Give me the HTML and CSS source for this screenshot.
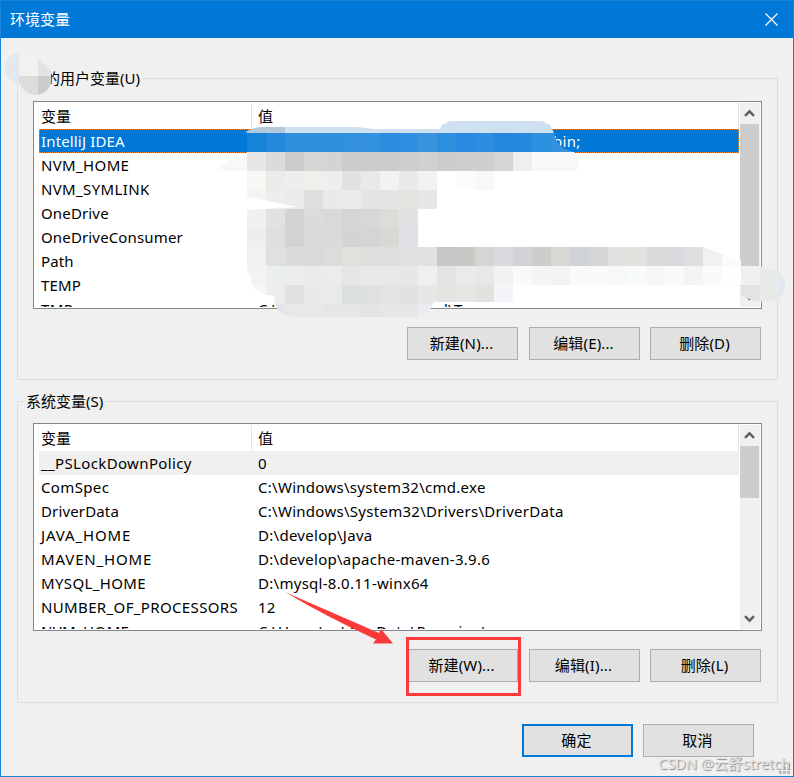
FILE: index.html
```html
<!DOCTYPE html>
<html lang="zh-CN">
<head>
<meta charset="utf-8">
<title>环境变量</title>
<link rel="stylesheet" href="styles.css">
</head>
<body>
<main class="window">
  <header class="titlebar">
    <span>环境变量</span>
    <svg class="close" width="13" height="13" viewBox="0 0 13 13"><path d="M.5 .5l12 12M12.5 .5l-12 12" stroke="#fff" stroke-width="1.2" fill="none"/></svg>
  </header>

  <section class="group user">
    <h2 class="legend">的用户变量(U)</h2>
    <div class="list">
      <div class="table">
        <div class="row head"><span>变量</span><span>值</span></div>
        <div class="row selected"><span>IntelliJ IDEA</span><span class="tail-bin">bin;</span></div>
        <div class="row caps"><span>NVM_HOME</span><span></span></div>
        <div class="row caps"><span>NVM_SYMLINK</span><span class="tail-link">_</span></div>
        <div class="row"><span>OneDrive</span><span>C:\U</span></div>
        <div class="row"><span>OneDriveConsumer</span><span></span></div>
        <div class="row"><span>Path</span><span></span></div>
        <div class="row"><span>TEMP</span><span></span></div>
        <div class="row caps"><span>TMP</span><span>C:\<i class="tail-tmp">l\Temp</i></span></div>
      </div>
      <div class="scroll">
        <svg width="19" height="21" viewBox="0 0 19 21"><path d="M5 12.8l4.5-4.5 4.5 4.5" fill="none" stroke="#606060" stroke-width="2.4"/></svg>
        <div class="thumb tall"></div>
        <svg class="down" width="19" height="21" viewBox="0 0 19 21"><path d="M5 8.200l4.500 4.500 4.500-4.500" fill="none" stroke="#606060" stroke-width="2.4"/></svg>
      </div>
    </div>
    <div class="buttons"><button>新建(N)...</button><button>编辑(E)...</button><button>删除(D)</button></div>
  </section>

  <section class="group system">
    <h2 class="legend">系统变量(S)</h2>
    <div class="list">
      <div class="table">
        <div class="row head"><span>变量</span><span>值</span></div>
        <div class="row muted caps"><span>__PSLockDownPolicy</span><span>0</span></div>
        <div class="row caps"><span>ComSpec</span><span>C:\Windows\system32\cmd.exe</span></div>
        <div class="row"><span>DriverData</span><span>C:\Windows\System32\Drivers\DriverData</span></div>
        <div class="row java"><span>JAVA_HOME</span><span>D:\develop\Java</span></div>
        <div class="row java"><span>MAVEN_HOME</span><span>D:\develop\apache-maven-3.9.6</span></div>
        <div class="row caps"><span>MYSQL_HOME</span><span>D:\mysql-8.0.11-winx64</span></div>
        <div class="row caps"><span>NUMBER_OF_PROCESSORS</span><span>12</span></div>
        <div class="row caps"><span>NVM_HOME</span><span>C:\Users\xx\AppData\Roaming\nvm</span></div>
      </div>
      <div class="scroll">
        <svg width="19" height="21" viewBox="0 0 19 21"><path d="M5 12.8l4.5-4.5 4.5 4.5" fill="none" stroke="#606060" stroke-width="2.4"/></svg>
        <div class="thumb short"></div>
        <svg class="down" width="19" height="21" viewBox="0 0 19 21"><path d="M5 8.200l4.500 4.500 4.500-4.500" fill="none" stroke="#606060" stroke-width="2.4"/></svg>
      </div>
    </div>
    <div class="buttons"><button>新建(W)...</button><button>编辑(I)...</button><button>删除(L)</button></div>
  </section>

  <footer class="footer"><button class="primary">确定</button><button>取消</button></footer>
</main>

<svg class="overlay" width="794" height="777" viewBox="0 0 794 777">
  <defs>
    <clipPath id="brush">
      <path d="M245 132L254 128L260 127H358L374 129H440L442 125L450 121H542L550 125L554 133L557 142L563 148L574 152L578 158L579 164L576 171H494V190H437V209H418V247H703L722 254L741 261V266H760L779 272L785 280V291L779 299L768 302L755 301L741 296V302H437L434 302L432 307L426 314L418 317H295L285 315L278 310L275 304L274 296L262 294L255 290L252 284L250 275L247 274V210L298 207L247 197V171H216L222 164L231 160L247 156V132Z"/>
    </clipPath>
    <clipPath id="avatar"><path d="M19 52C0 54 0 81 19 83q6 12 17 12 10 0 15-11V71L38 58v-6z"/></clipPath>
  </defs>
  <g id="mosaic" clip-path="url(#brush)" shape-rendering="crispEdges"></g>
  <g clip-path="url(#avatar)">
    <path fill="#e2e8ed" d="M0 50h19v34H0z"/><path fill="#f1f1f1" d="M19 52h19v24H19z"/>
    <path fill="#e3e3e3" d="M38 57h14v19H38z"/><path fill="#dddcdb" d="M19 76h19v20H19z"/><path fill="#cbcccd" d="M38 76h14v20H38z"/>
  </g>
  <path fill="#fb3a3a" d="M285 592L379 633L381 629L393 643.500L373 643.500L376 639.500Q325 616 285 592z"/>
  <path fill="none" stroke="#fb3a3a" stroke-width="3" d="M407.500 638.500h112v56h-112z"/>
  <path fill="#bcbcbc" d="M787 763h3v3h-3zM783 767h3v3h-3zM787 767h3v3h-3zM779 771h3v3h-3zM783 771h3v3h-3zM787 771h3v3h-3z"/>
</svg>
<div class="watermark">CSDN @云舒stretch</div>
<script src="mosaic.js"></script>
</body>
</html>
```
FILE: mosaic.js
```js
// Each row: x, y, height, then one colour per 19px cell ("-" leaves a gap).
const CELL = 19;
const rows = [
  [228, 114, 19, "b5cad9 b5cad9 b5cad9 cfe1f0 cfe1f0 cfe1f0 cfe1f0 cfe1f0 cfe1f0 cfe1f0 cfe1f0 cfe1f0 cfe1f0 cfe1f0 cfe1f0 cfe1f0 cfe1f0 cfe1f0"],
  [247, 133, 19, "1683db 2589de 2f90df 2f90df 2f90df 3191df 3491df 2a8ddd 2c8fdf 3993df 2d8fe0 278ae0 2c8ee0 2287dd 2589df 2c8fdf 3491df 3491df"],
  [209, 152, 19, "f7f8f8 f7f8f8 e7e7e7 dadcdb cdcccb d5d6d4 d6d4d2 cdcccd cbcbcb cbcbcc cfcdce d0d1d0 cbcdcb cfcfcd cfcfcf d4d5d4 efefef f7f8f8 f7f8f8 f7f8f8"],
  [247, 171, 19, "f7f7f4 ebebe9 eeeeee efefec ecefee e2e2e3 e9e9e9 f2f2f2 e9e9e9 f2f2f2 - fcfcfc f8f8f8"],
  [247, 190, 19, "f3f3f3 eceeec ebebe9 dededf e8eae9 ebebec e4e4e2 e4e4e4 e4e4e1 e6e8e7"],
  [247, 209, 19, "f0f0f0 e1e1e1 d3d3d4 dbdbd9 d9d9da d5d5d5 d7d7d7 dcdcd9 e1e2e4"],
  [247, 228, 19, "eeeeee dfdfdf d2d2d2 dadad8 dadada d4d4d4 d5d5d5 d8d8d5 e0e1e4"],
  [247, 247, 19, "f1f1f1 e0e0e0 dadcdb d8dad9 dcdcdd e1e0dd dedede dcdfdd e1e1e0 e1e1df c5c7c7 cac8c4 d5d5d4 d9dadd d2d3d6 cdcdc9 d9d7d4 d0d4d6 d5d5d3 e0e3e2 e4e2df dadcdb d8dadd dedede f0f2f1 fbfbfb"],
  [247, 266, 19, "f3f3f3 eaeeed ededed ebebeb ececec e5e5e6 e9e9e9 e9e9e9 e8e6e7 edeff1 e4e4e1 ebebeb e8e8e8 f2f2f2 f9fbfa f5f5f5 f3f3f3 fafafa fafaf8 f7f8f8 f7fbfa f7f7f7 fafafa f4f4f4 fafafa fefefe f0f0f0 e8eae9 e0e8f0"],
  [247, 285, 19, "f7f7f7 ededee e2e2e3 e9e9e7 eaeae8 dbdfde e0e0e0 e3e3e3 e1e1e1 e6e8e7 e4e4e1 e6e6e5 e2e2df f4f5f8 - - - - - - - - - - - - e3e3e3 e8eae9 e0e8f0"],
  [266, 304, 14, "e3e4e8 e8e8e8 e8e8e8 e6e6e6 e6e6e6 e4e4e4 e6e6e6 e6e6e6 ebecef"]
];
const layer = document.getElementById("mosaic");
rows.forEach(([x, y, height, cells]) => cells.split(" ").forEach((c, i) => {
  if (c === "-") return;
  const r = document.createElementNS("http://www.w3.org/2000/svg", "rect");
  Object.entries({ x: x + i * CELL, y, width: CELL, height, fill: "#" + c })
    .forEach(([k, v]) => r.setAttribute(k, v));
  layer.appendChild(r);
}));
```
FILE: styles.css
```css
* { box-sizing: border-box; }
body {
  margin: 0;
  width: 794px;
  height: 777px;
  overflow: hidden;
  position: relative;
  font: 15px/24px "Noto Sans", "Noto Sans CJK SC", sans-serif;
  color: #000;
}
.window {
  width: 794px;
  height: 777px;
  background: #f0f0f0;
  border: 1px solid #1883d7;
}
.titlebar {
  height: 37px;
  background: #0078d7;
  color: #fff;
  display: flex;
  align-items: center;
  justify-content: space-between;
  padding: 0 15px 1px 9px;
}
.group {
  width: 761px;
  height: 302px;
  margin-left: 16px;
  border: 1px solid #dcdcdc;
}
.user { margin-top: 40px; }
.system { margin-top: 21px; }
.legend {
  width: fit-content;
  height: 20px;
  margin: -10px 0 0 6px;
  padding: 0 3px 0 2px;
  background: #f0f0f0;
  font-size: 15px;
  font-weight: 400;
  line-height: 18px;
}
.user .legend { padding-left: 21px; }
.list {
  display: flex;
  width: 729px;
  height: 208px;
  margin: 12px 0 0 15px;
  padding: 1px 1px 1px 5px;
  border: 1px solid #828790;
  background: #fff;
}
.system .list { margin-top: 11px; }
.table { width: 701px; overflow: hidden; }
.row {
  display: grid;
  grid-template-columns: 213px 1fr;
  height: 24px;
  width: 700px;
  white-space: pre;
  letter-spacing: .15px;
}
.caps { letter-spacing: .36px; }
.java { letter-spacing: .85px; }
.row span { padding-left: 2px; }
.row span + span { padding-left: 6px; letter-spacing: .28px; }
.head { height: 26px; line-height: 27px; border-right: 1px solid #e5e5e5; letter-spacing: 0; }
.head span + span { border-left: 1px solid #e5e5e5; margin-left: -1px; }
.selected { background: #0078d7; color: #fff; outline: 1px dotted #ff8728; outline-offset: -1px; }
.muted { background: #f0f0f0; }
.row .tail-bin.tail-bin { padding-left: 301px; }
.row .tail-link.tail-link { padding-left: 161px; }
.tail-tmp { font-style: normal; margin-left: 166px; }
.scroll {
  width: 20px;
  background: #f0f0f0;
  display: flex;
  flex-direction: column;
}
.scroll svg { display: block; flex: none; }
.thumb { width: 19px; background: #cdcdcd; flex: none; }
.tall { height: 162px; }
.short { height: 52px; }
.down { margin-top: auto; }
.buttons {
  display: flex;
  justify-content: flex-end;
  gap: 10px;
  margin: 18px 16px 0 0;
}
.buttons button:first-child { margin-right: 1px; }
button {
  width: 111px;
  height: 33px;
  padding: 0 2px 2px 0;
  border: 1px solid #adadad;
  background: #e1e1e1;
  color: #000;
  font: inherit;
  letter-spacing: .15px;
}
.footer {
  display: flex;
  justify-content: flex-end;
  gap: 10px;
  margin: 21px 39px 0 0;
}
.primary { border: 2px solid #0078d7; }
.overlay { position: absolute; left: 0; top: 0; pointer-events: none; }
.watermark {
  position: absolute;
  right: 4px;
  bottom: 2px;
  font-size: 14.500px;
  color: #e4e4e4;
  text-shadow: 1px 1px 1px #888;
  white-space: nowrap;
}
```
